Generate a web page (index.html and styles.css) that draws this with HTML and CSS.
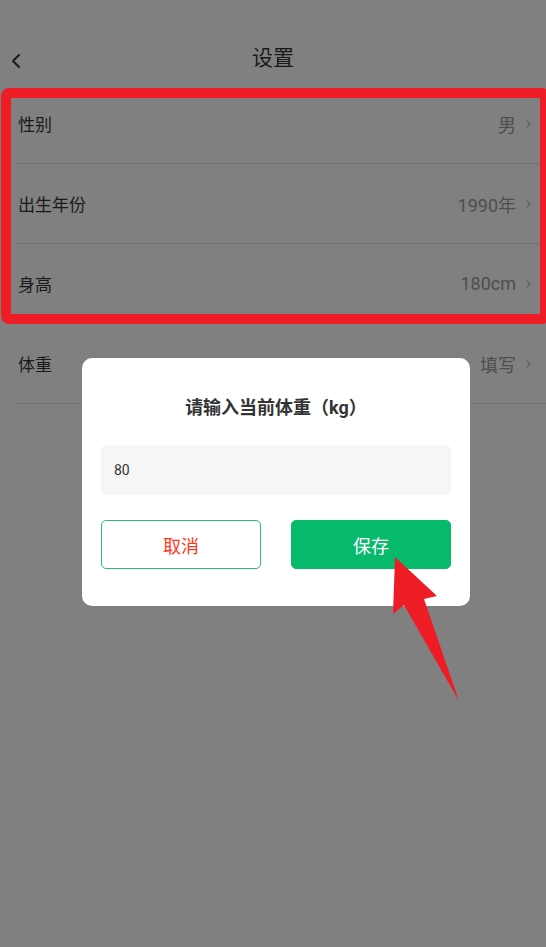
FILE: index.html
```html
<!DOCTYPE html>
<html lang="zh-CN">
<head>
<meta charset="utf-8">
<title>设置</title>
<link rel="stylesheet" href="styles.css">
</head>
<body>
<div class="page">
  <header class="nav">
    <span class="back">
      <svg width="12" height="16" viewBox="0 0 12 16"><polyline points="9,2 3,8 9,14" fill="none" stroke="#1a1a1a" stroke-width="2" stroke-linecap="round" stroke-linejoin="round"/></svg>
    </span>
    <h1 class="title">设置</h1>
  </header>
  <ul class="list">
    <li class="row"><span class="label">性别</span><span class="value">男</span><svg class="chev" width="7" height="10" viewBox="0 0 7 10"><polyline points="1.5,1.5 5,5 1.5,8.5" fill="none" stroke="#606060" stroke-width="1.2"/></svg></li>
    <li class="row"><span class="label">出生年份</span><span class="value">1990年</span><svg class="chev" width="7" height="10" viewBox="0 0 7 10"><polyline points="1.5,1.5 5,5 1.5,8.5" fill="none" stroke="#606060" stroke-width="1.2"/></svg></li>
    <li class="row"><span class="label">身高</span><span class="value">180cm</span><svg class="chev" width="7" height="10" viewBox="0 0 7 10"><polyline points="1.5,1.5 5,5 1.5,8.5" fill="none" stroke="#606060" stroke-width="1.2"/></svg></li>
    <li class="row"><span class="label">体重</span><span class="value">填写</span><svg class="chev" width="7" height="10" viewBox="0 0 7 10"><polyline points="1.5,1.5 5,5 1.5,8.5" fill="none" stroke="#606060" stroke-width="1.2"/></svg></li>
  </ul>

  <div class="highlight"></div>

  <div class="dialog">
    <div class="dialog-title">请输入当前体重（kg）</div>
    <div class="input">80</div>
    <div class="actions">
      <button class="btn btn-cancel">取消</button>
      <button class="btn btn-save">保存</button>
    </div>
  </div>

  <svg class="arrow" width="546" height="947" viewBox="0 0 546 947">
    <polygon points="395,557 437,596 424,599 459,701 404,605 393,614" fill="#ee1c25"/>
  </svg>
</div>
</body>
</html>
```

FILE: styles.css
```css
* { box-sizing: border-box; }
html, body { margin: 0; padding: 0; }
body {
  width: 546px;
  height: 947px;
  background: #808080;
  font-family: Roboto, "Noto Sans CJK SC", sans-serif;
  overflow: hidden;
}
.page {
  position: relative;
  width: 546px;
  height: 947px;
}
.nav {
  position: relative;
  height: 84px;
  padding-top: 32px;
}
.title {
  margin: 0;
  height: 52px;
  line-height: 52px;
  text-align: center;
  font-size: 21px;
  font-weight: normal;
  color: #1a1a1a;
}
.back {
  position: absolute;
  left: 10px;
  top: 53px;
  display: flex;
}
.list {
  list-style: none;
  margin: 0 0 0 16px;
  padding: 0;
}
.row {
  display: flex;
  align-items: center;
  height: 80px;
  padding: 0 14px 0 2px;
  border-bottom: 1px solid #747474;
}
.label {
  flex: 1;
  font-size: 17px;
  color: #1a1a1a;
}
.value {
  font-size: 18px;
  color: #4e4e4e;
  margin-right: 9px;
}
.chev { display: block; }

.highlight {
  position: absolute;
  left: 1px;
  right: -4px;
  top: 88px;
  height: 236px;
  border: 10px solid #ee1c25;
  border-radius: 8px;
}

.dialog {
  position: absolute;
  left: 82px;
  top: 358px;
  width: 388px;
  height: 248px;
  background: #fff;
  border-radius: 10px;
  padding: 36px 19px 0;
}
.dialog-title {
  height: 28px;
  line-height: 28px;
  text-align: center;
  font-size: 18px;
  font-weight: bold;
  color: #333;
}
.input {
  margin-top: 23px;
  height: 50px;
  line-height: 50px;
  padding-left: 13px;
  background: #f6f6f6;
  border-radius: 5px;
  font-size: 14px;
  color: #333;
}
.actions {
  margin-top: 25px;
  display: flex;
  gap: 30px;
}
.btn {
  flex: 1;
  height: 49px;
  border-radius: 5px;
  font-family: Roboto, "Noto Sans CJK SC", sans-serif;
  font-size: 18px;
  padding: 0;
}
.btn-cancel {
  background: #fff;
  border: 1px solid #2dba7c;
  color: #ff3a1e;
}
.btn-save {
  background: #06b96b;
  border: 1px solid #06b96b;
  color: #fff;
}
.arrow {
  position: absolute;
  left: 0;
  top: 0;
  pointer-events: none;
}
```
